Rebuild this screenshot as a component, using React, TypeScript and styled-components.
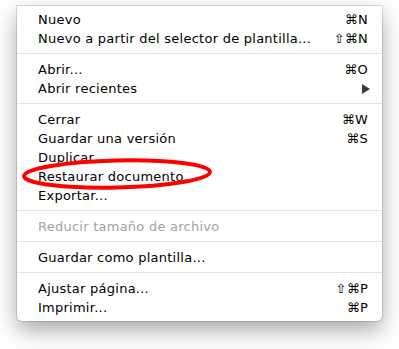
import React from 'react';
import styled, { createGlobalStyle } from 'styled-components';

type Entry =
  | { kind: 'item'; label: string; shortcut?: string; submenu?: boolean; disabled?: boolean }
  | { kind: 'sep' };

const entries: Entry[] = [
  { kind: 'item', label: 'Nuevo', shortcut: '⌘N' },
  { kind: 'item', label: 'Nuevo a partir del selector de plantilla...', shortcut: '⇧⌘N' },
  { kind: 'sep' },
  { kind: 'item', label: 'Abrir...', shortcut: '⌘O' },
  { kind: 'item', label: 'Abrir recientes', submenu: true },
  { kind: 'sep' },
  { kind: 'item', label: 'Cerrar', shortcut: '⌘W' },
  { kind: 'item', label: 'Guardar una versión', shortcut: '⌘S' },
  { kind: 'item', label: 'Duplicar' },
  { kind: 'item', label: 'Restaurar documento...' },
  { kind: 'item', label: 'Exportar...' },
  { kind: 'sep' },
  { kind: 'item', label: 'Reducir tamaño de archivo', disabled: true },
  { kind: 'sep' },
  { kind: 'item', label: 'Guardar como plantilla...' },
  { kind: 'sep' },
  { kind: 'item', label: 'Ajustar página...', shortcut: '⇧⌘P' },
  { kind: 'item', label: 'Imprimir...', shortcut: '⌘P' },
];

const App: React.FC = () => {
  return (
    <>
      <GlobalStyle />
      <Stage>
        <Menu>
          {entries.map((e, i) =>
            e.kind === 'sep' ? (
              <Separator key={i} />
            ) : (
              <Row key={i} $disabled={e.disabled}>
                <Label>{e.label}</Label>
                {e.shortcut && <Shortcut>{e.shortcut}</Shortcut>}
                {e.submenu && <Arrow />}
              </Row>
            )
          )}
          <Highlight viewBox="0 0 196 34" aria-hidden>
            <ellipse
              cx="98"
              cy="17"
              rx="93"
              ry="13.5"
              fill="none"
              stroke="#ff0000"
              strokeWidth="4"
              transform="rotate(-1.3 98 17)"
            />
          </Highlight>
        </Menu>
      </Stage>
    </>
  );
};

const GlobalStyle = createGlobalStyle`
  html, body {
    margin: 0;
    background: #ffffff;
  }
`;

const Stage = styled.div`
  width: 399px;
  height: 349px;
  padding: 6px 0 0 17px;
  box-sizing: border-box;
`;

const Menu = styled.div`
  position: relative;
  width: 365px;
  box-sizing: border-box;
  padding: 4px 0 4px;
  background: #ffffff;
  border-radius: 0 0 5px 5px;
  box-shadow: 0 0 0 1px rgba(0, 0, 0, 0.12), 0 9px 22px rgba(0, 0, 0, 0.35);
  font-family: "DejaVu Sans", sans-serif;
  font-size: 13px;
  letter-spacing: 0.25px;
`;

const Row = styled.div<{ $disabled?: boolean }>`
  display: flex;
  align-items: center;
  height: 19px;
  padding: 0 14px 0 21px;
  color: ${p => (p.$disabled ? '#a3a3a3' : '#000000')};
`;

const Label = styled.span`
  flex: 1;
  white-space: nowrap;
`;

const Shortcut = styled.span`
  white-space: nowrap;
`;

const Arrow = styled.span`
  width: 0;
  height: 0;
  border-top: 5px solid transparent;
  border-bottom: 5px solid transparent;
  border-left: 8px solid #3a3a3a;
  margin-right: -2px;
`;

const Separator = styled.div`
  height: 1px;
  margin: 5px 0 6px;
  background: #e2e2e2;
`;

const Highlight = styled.svg`
  position: absolute;
  left: 2px;
  top: 151px;
  width: 196px;
  height: 34px;
  overflow: visible;
`;

export default App;
